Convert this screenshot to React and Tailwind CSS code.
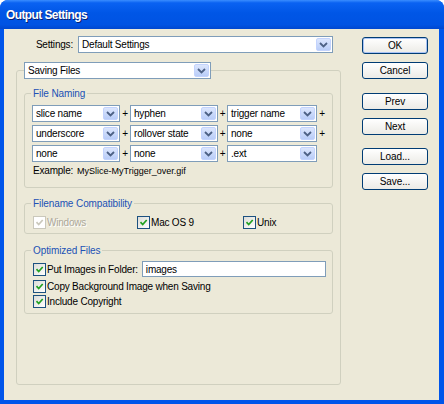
import React from 'react';

const Chevron = () => (
  <svg width="9" height="6" viewBox="0 0 9 6">
    <path d="M1 1l3.5 3.5L8 1" fill="none" stroke="#4D6185" strokeWidth="1.8" />
  </svg>
);

function Combo({ value, className = '' }) {
  return (
    <div className={`flex h-[17px] items-stretch border border-[#7F9DB9] bg-white ${className}`}>
      <span className="flex-1 truncate pl-[3px] text-left text-[10px] leading-[15px] tracking-[-0.2px] text-black">{value}</span>
      <span className="m-[1px] flex w-[15px] items-center justify-center rounded-[2px] border border-[#C3D3FD] bg-[linear-gradient(to_bottom,#DCE6FD,#B9CDF8)]">
        <Chevron />
      </span>
    </div>
  );
}

function Check({ disabled }) {
  return (
    <span
      className={`flex h-[13px] w-[13px] shrink-0 items-center justify-center border ${
        disabled ? 'border-[#CAC8BB] bg-white' : 'border-[#1C5180] bg-[linear-gradient(135deg,#DCDCD7,#FFFFFF)]'
      }`}
    >
      <svg width="9" height="9" viewBox="0 0 9 9">
        <path d="M1.5 4.2l2.2 2.3L7.7 2" fill="none" stroke={disabled ? '#CAC8BB' : '#21A121'} strokeWidth="1.7" />
      </svg>
    </span>
  );
}

function Group({ title, className = '', children }) {
  return (
    <fieldset className={`rounded-[3px] border border-[#D0D0BF] ${className}`}>
      <legend className="ml-[6px] px-[2px] text-[10px] leading-[13px] tracking-[-0.1px] text-[#2151B5]">{title}</legend>
      {children}
    </fieldset>
  );
}

function Btn({ children, primary, className = '' }) {
  return (
    <div
      className={`flex h-[17px] w-[66px] items-center justify-center rounded-[3px] border border-[#003C74] bg-[linear-gradient(to_bottom,#FFFFFF,#ECEBE6)] text-[10px] tracking-[-0.1px] text-black ${
        primary ? 'shadow-[inset_0_0_0_1px_#A9C3F5]' : ''
      } ${className}`}
    >
      {children}
    </div>
  );
}

const Plus = ({ w }) => <span className={`text-center text-[10px] leading-none text-black ${w}`}>+</span>;

const rows = [
  ['slice name', 'hyphen', 'trigger name', true],
  ['underscore', 'rollover state', 'none', true],
  ['none', 'none', '.ext', false],
];

export default function App() {
  return (
    <div className="flex h-[404px] w-[444px] flex-col overflow-hidden rounded-t-[8px] bg-[#0055EA] font-['Liberation_Sans',Arial,sans-serif]">
      {/* title bar */}
      <div className="flex h-[29px] shrink-0 items-center bg-[linear-gradient(to_bottom,#3A8DFF_0%,#0A62F2_10%,#0056E6_45%,#0053E3_85%,#0047CF_100%)] pl-[6px]">
        <span className="text-[12px] font-bold tracking-[-0.6px] text-white [text-shadow:1px_1px_0_#0A1E6E]">Output Settings</span>
      </div>

      <div className="mb-[4px] ml-[4px] mr-[5px] flex flex-1 bg-[#ECE9D8] pt-[7px] text-[10px] tracking-[-0.2px] text-black">
        {/* left side */}
        <div className="ml-[12px] w-[325px]">
          <div className="flex items-center">
            <span className="w-[57px] text-right">Settings:</span>
            <Combo value="Default Settings" className="ml-[5px] w-[255px]" />
          </div>

          <fieldset className="mt-[9px] h-[323px] rounded-[3px] border border-[#D0D0BF] px-[7px]">
            <legend>
              <Combo value="Saving Files" className="w-[187px]" />
            </legend>

            <Group title="File Naming" className="mt-[8px] pb-[9px]">
              <div className="flex flex-col gap-[3px] pl-[7px] pt-[5px]">
                {rows.map((r, i) => (
                  <div key={i} className="flex items-center">
                    <Combo value={r[0]} className="w-[88px]" />
                    <Plus w="w-[10px]" />
                    <Combo value={r[1]} className="w-[88px]" />
                    <Plus w="w-[9px]" />
                    <Combo value={r[2]} className="w-[90px]" />
                    {r[3] && <Plus w="w-[10px]" />}
                  </div>
                ))}
              </div>
              <div className="mt-[2px] flex items-baseline pl-[8px] leading-[13px]">
                <span>Example:</span>
                <span className="ml-[4px] text-[9px] tracking-normal">MySlice-MyTrigger_over.gif</span>
              </div>
            </Group>

            <Group title="Filename Compatibility" className="mt-[9px] pb-[4px]">
              <div className="flex items-center pl-[8px] pt-[6px] leading-[13px]">
                <div className="flex w-[104px] items-center">
                  <Check disabled />
                  <span className="ml-[1px] text-[#ACA899] [text-shadow:1px_1px_0_#FFFFFF]">Windows</span>
                </div>
                <div className="flex w-[106px] items-center">
                  <Check />
                  <span className="ml-[1px]">Mac OS 9</span>
                </div>
                <div className="flex items-center">
                  <Check />
                  <span className="ml-[1px]">Unix</span>
                </div>
              </div>
            </Group>

            <Group title="Optimized Files" className="mt-[10px] pb-[5px]">
              <div className="pl-[8px] pt-[4px]">
                <div className="flex h-[16px] items-center whitespace-nowrap">
                  <Check />
                  <span className="ml-[1px]">Put Images in Folder:</span>
                  <div className="ml-[4px] flex h-[16px] w-[184px] items-center border border-[#7F9DB9] bg-white pl-[3px]">images</div>
                </div>
                <div className="mt-[2px] flex h-[14px] items-center">
                  <Check />
                  <span className="ml-[1px]">Copy Background Image when Saving</span>
                </div>
                <div className="mt-[1px] flex h-[14px] items-center">
                  <Check />
                  <span className="ml-[1px]">Include Copyright</span>
                </div>
              </div>
            </Group>
          </fieldset>
        </div>

        {/* buttons */}
        <div className="ml-[21px] mt-[1px] flex w-[66px] flex-col">
          <Btn primary>OK</Btn>
          <Btn className="mt-[8px]">Cancel</Btn>
          <Btn className="mt-[14px]">Prev</Btn>
          <Btn className="mt-[8px]">Next</Btn>
          <Btn className="mt-[13px]">Load...</Btn>
          <Btn className="mt-[8px]">Save...</Btn>
        </div>
      </div>
    </div>
  );
}
